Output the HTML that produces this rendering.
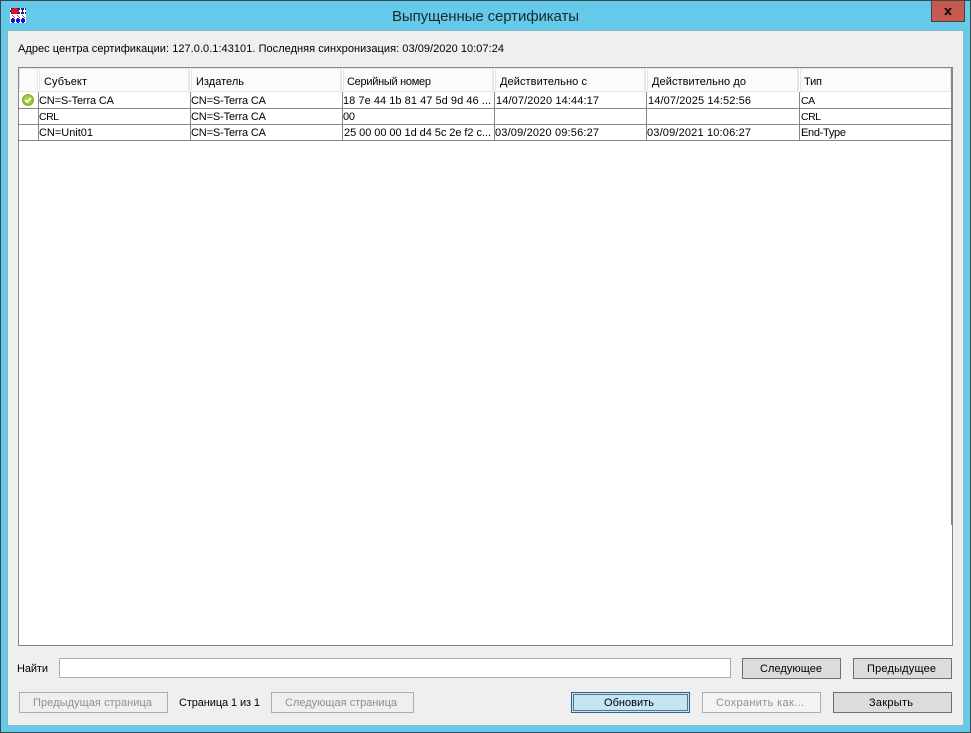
<!DOCTYPE html>
<html><head><meta charset="utf-8"><title>Выпущенные сертификаты</title>
<style>
html,body{margin:0;padding:0;width:971px;height:733px;overflow:hidden;background:#65c9ea}
svg{display:block;position:absolute;left:0;top:0}
text{font-family:"Liberation Sans",sans-serif;font-size:11px;fill:#000;white-space:pre}
.d{fill:#8f8f8f}
.n{font-size:10.5px;letter-spacing:-.5px}
</style></head><body>
<svg width="971" height="733" viewBox="0 0 971 733" xmlns="http://www.w3.org/2000/svg" shape-rendering="crispEdges">
<rect width="971" height="733" fill="#65c9ea"/>
<rect x="0" y="0" width="971" height="1" fill="#3c4a50"/>
<rect x="0" y="0" width="1" height="733" fill="#3c4a50"/>
<rect x="970" y="0" width="1" height="733" fill="#3c4a50"/>
<rect x="0" y="732" width="971" height="1" fill="#3c4a50"/>
<rect x="7" y="30" width="957" height="696" fill="#8fb9c8"/>
<rect x="8" y="31" width="955" height="694" fill="#efefef"/>

<!-- app icon -->
<rect x="10" y="8" width="16" height="15" fill="#fff"/>
<rect x="10" y="8" width="16" height="6" fill="#0a2a9a"/>
<path d="M20 8h1v2h1v2h-1v2h-1v-2h-1v-2h1zM24 8h1v2h1v2h-1v2h-1v-2h-1v-2h1zM10 8h1v2h-1zM10 12h1v2h-1z" fill="#fff"/>
<rect x="13" y="8" width="4" height="6" fill="#f01010"/>
<rect x="12" y="9" width="6" height="4" fill="#f01010"/>
<rect x="11" y="10" width="8" height="2" fill="#f01010"/>
<path d="M12 15h1v1h1v1h1v1h-1v-1h-1v-1h-1zM17 15h1v1h1v1h1v1h-1v-1h-1v-1h-1zM22 15h1v1h1v1h1v1h-1v-1h-1v-1h-1z" fill="#f03010"/>
<g fill="#1018e0">
<rect x="12" y="18" width="2" height="5"/><rect x="11" y="19" width="4" height="3"/>
<rect x="17" y="18" width="2" height="5"/><rect x="16" y="19" width="4" height="3"/>
<rect x="22" y="18" width="2" height="5"/><rect x="21" y="19" width="4" height="3"/>
</g>

<!-- close button -->
<rect x="931" y="0" width="34" height="22" fill="#4d4242"/>
<rect x="932" y="1" width="32" height="20" fill="#c75a50"/>
<path d="M944 8h2.4l1.6 2 1.6-2h2.4l-2.8 3.5 2.8 3.5h-2.4l-1.6-2-1.6 2h-2.4l2.8-3.5z" fill="#111" shape-rendering="auto"/>

<text x="392" y="21" textLength="187" lengthAdjust="spacing" style="font-size:15px;fill:#1a2a30" shape-rendering="auto">Выпущенные сертификаты</text>
<text x="18" y="52" textLength="486" lengthAdjust="spacing">Адрес центра сертификации: 127.0.0.1:43101. Последняя синхронизация: 03/09/2020 10:07:24</text>

<!-- table -->
<rect x="18" y="67" width="935" height="579" fill="#82878c"/>
<rect x="19" y="68" width="933" height="577" fill="#fff"/>
<rect x="951" y="68" width="1" height="457" fill="#82878c"/>

<!-- header -->
<rect x="19" y="68" width="932" height="24" fill="#e6e6e6"/>
<rect x="20" y="69" width="17" height="22" fill="#fbfbfb"/>
<rect x="40" y="69" width="148" height="22" fill="#fbfbfb"/>
<rect x="192" y="69" width="148" height="22" fill="#fbfbfb"/>
<rect x="344" y="69" width="148" height="22" fill="#fbfbfb"/>
<rect x="496" y="69" width="148" height="22" fill="#fbfbfb"/>
<rect x="648" y="69" width="149" height="22" fill="#fbfbfb"/>
<rect x="801" y="69" width="149" height="22" fill="#fbfbfb"/>
<path d="M38 68h1v24h-1zM190 68h1v24h-1zM342 68h1v24h-1zM494 68h1v24h-1zM646 68h1v24h-1zM799 68h1v24h-1z" fill="#fff"/>

<!-- grid -->
<g fill="#82878c">
<rect x="19" y="108" width="933" height="1"/>
<rect x="19" y="124" width="933" height="1"/>
<rect x="19" y="140" width="933" height="1"/>
<rect x="38" y="92" width="1" height="49"/>
<rect x="190" y="92" width="1" height="49"/>
<rect x="342" y="92" width="1" height="49"/>
<rect x="494" y="92" width="1" height="49"/>
<rect x="646" y="92" width="1" height="49"/>
<rect x="799" y="92" width="1" height="49"/>
</g>

<!-- status icon -->
<g shape-rendering="auto">
<circle cx="28" cy="100" r="6" fill="#8ab52c"/>
<circle cx="28" cy="99.6" r="4.4" fill="#a5cb4a"/>
<path d="M25.2 100l2 2 3.6-4" fill="none" stroke="#fff" stroke-width="1.7"/>
</g>

<g>
<text x="44" y="85" textLength="43">Субъект</text>
<text x="196" y="85" textLength="48">Издатель</text>
<text x="347" y="85" textLength="84">Серийный номер</text>
<text x="500" y="85" textLength="87">Действительно с</text>
<text x="652" y="85" textLength="94">Действительно до</text>
<text x="804" y="85" textLength="18">Тип</text>

<text x="39" y="104" textLength="75">CN=S-Terra CA</text>
<text x="191" y="104" textLength="75">CN=S-Terra CA</text>
<text x="343" y="104" textLength="148">18 7e 44 1b 81 47 5d 9d 46 ...</text>
<text x="496" y="104" textLength="103">14/07/2020 14:44:17</text>
<text x="648" y="104" textLength="103">14/07/2025 14:52:56</text>
<text class="n" x="801" y="104">CA</text>

<text class="n" x="39" y="120">CRL</text>
<text x="191" y="120" textLength="75">CN=S-Terra CA</text>
<text x="343" y="120" textLength="12">00</text>
<text class="n" x="801" y="120">CRL</text>

<text x="39" y="136" textLength="54">CN=Unit01</text>
<text x="191" y="136" textLength="75">CN=S-Terra CA</text>
<text x="344" y="136" textLength="147">25 00 00 00 1d d4 5c 2e f2 c...</text>
<text x="495" y="136" textLength="104">03/09/2020 09:56:27</text>
<text x="647" y="136" textLength="104">03/09/2021 10:06:27</text>
<text x="801" y="136" textLength="45">End-Type</text>
</g>

<!-- find -->
<text x="17" y="672" textLength="31">Найти</text>
<rect x="59.5" y="658.5" width="671" height="19" fill="#fff" stroke="#adadad"/>

<!-- buttons -->
<rect x="742.5" y="658.5" width="98" height="20" fill="#dcdcdc" stroke="#707070"/>
<text x="760" y="672" textLength="62">Следующее</text>
<rect x="853.5" y="658.5" width="98" height="20" fill="#dcdcdc" stroke="#707070"/>
<text x="867" y="672" textLength="69">Предыдущее</text>

<rect x="19.5" y="692.5" width="148" height="20" fill="#efefef" stroke="#adadad"/>
<text class="d" x="33" y="706" textLength="119">Предыдущая страница</text>
<text x="179" y="706" textLength="81">Страница 1 из 1</text>
<rect x="271.5" y="692.5" width="142" height="20" fill="#efefef" stroke="#adadad"/>
<text class="d" x="285" y="706" textLength="112">Следующая страница</text>

<rect x="571.5" y="692.5" width="118" height="20" fill="#c4e5f6" stroke="#2c628b"/>
<rect x="573.5" y="694.5" width="114" height="16" fill="none" stroke="#000" stroke-dasharray="1 1"/>
<text x="604" y="706" textLength="50">Обновить</text>
<rect x="702.5" y="692.5" width="118" height="20" fill="#f4f4f4" stroke="#adadad"/>
<text class="d" x="716" y="706" textLength="88">Сохранить как...</text>
<rect x="833.5" y="692.5" width="118" height="20" fill="#dcdcdc" stroke="#707070"/>
<text x="869" y="706" textLength="44">Закрыть</text>
</svg>
</body></html>
